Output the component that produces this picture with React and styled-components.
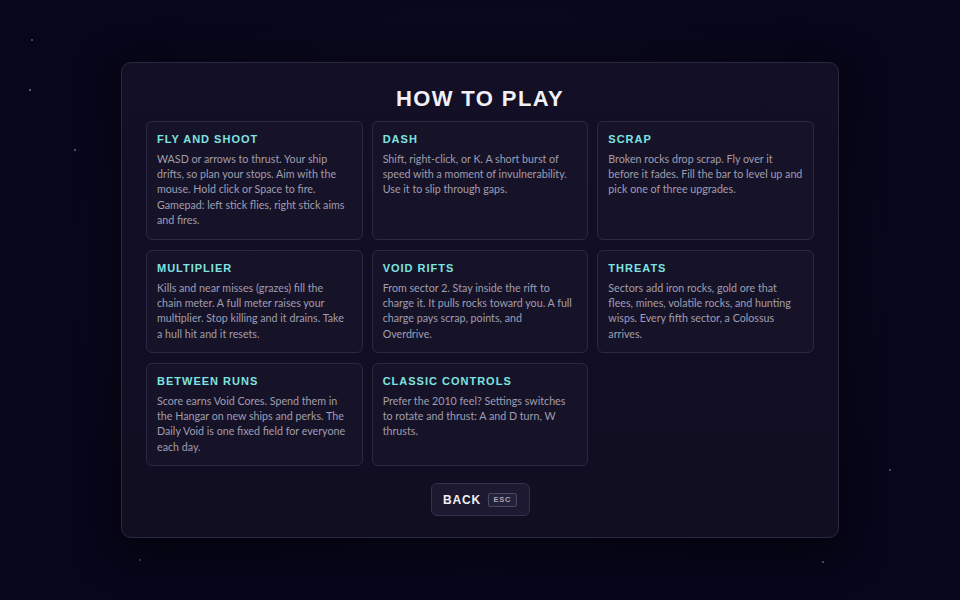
import styled, { createGlobalStyle } from "styled-components";

const GlobalStyle = createGlobalStyle`
  html, body {
    margin: 0;
    padding: 0;
    height: 100%;
  }
  body {
    background-color: #07061a;
    background-image:
      radial-gradient(circle at 30px 90px, rgba(255,255,255,0.35) 0 1px, transparent 1.5px),
      radial-gradient(circle at 75px 150px, rgba(255,255,255,0.3) 0 1px, transparent 1.5px),
      radial-gradient(circle at 32px 40px, rgba(255,255,255,0.25) 0 1px, transparent 1.5px),
      radial-gradient(circle at 890px 470px, rgba(255,255,255,0.25) 0 1px, transparent 1.5px),
      radial-gradient(circle at 823px 562px, rgba(255,255,255,0.3) 0 1px, transparent 1.5px),
      radial-gradient(circle at 140px 560px, rgba(255,255,255,0.2) 0 1px, transparent 1.5px),
      radial-gradient(ellipse at 50% 45%, #0f0d22 0%, #07061a 70%);
    font-family: "Noto Sans", Inter, sans-serif;
  }
  #root {
    height: 100%;
  }
`;

const Screen = styled.div`
  height: 100%;
  display: flex;
  align-items: center;
  justify-content: center;
`;

const Panel = styled.div`
  width: 718px;
  box-sizing: border-box;
  padding: 22px 24px 21px;
  background: linear-gradient(180deg, #120f26 0%, #110e22 100%);
  border: 1px solid #2a2740;
  border-radius: 10px;
  box-shadow: 0 10px 40px rgba(0, 0, 0, 0.6);
  display: flex;
  flex-direction: column;
  align-items: center;
`;

const Title = styled.h1`
  margin: 0 0 8px;
  font-family: "Liberation Sans", Arial, sans-serif;
  font-weight: 700;
  font-size: 22px;
  line-height: 28px;
  letter-spacing: 1.4px;
  color: #f1f0f6;
`;

const Grid = styled.div`
  width: 100%;
  display: grid;
  grid-template-columns: repeat(3, 1fr);
  column-gap: 9px;
  row-gap: 10px;
`;

const Card = styled.div`
  box-sizing: border-box;
  min-height: ${(p) => (p.$tall ? "119px" : "103px")};
  padding: 10px 9px 9px 10px;
  background: #161329;
  border: 1px solid #2b2843;
  border-radius: 6px;
`;

const CardTitle = styled.h2`
  margin: 0 0 5px;
  font-family: "Liberation Sans", Arial, sans-serif;
  font-weight: 700;
  font-size: 11px;
  line-height: 14px;
  letter-spacing: 1px;
  color: #7ee3e0;
`;

const CardText = styled.p`
  margin: 0;
  white-space: pre-line;
  font-family: Lato, "Noto Sans", sans-serif;
  font-size: 10.7px;
  line-height: 15.2px;
  color: #a09dae;
`;

const BackButton = styled.button`
  margin-top: 17px;
  width: 99px;
  height: 33px;
  display: flex;
  align-items: center;
  justify-content: center;
  gap: 7px;
  background: #1c1930;
  border: 1px solid #34314a;
  border-radius: 6px;
  color: #f1f0f6;
  font-family: "Liberation Sans", Arial, sans-serif;
  font-weight: 700;
  font-size: 12px;
  letter-spacing: 0.8px;
  cursor: pointer;
`;

const Key = styled.span`
  display: inline-flex;
  align-items: center;
  justify-content: center;
  box-sizing: border-box;
  height: 14px;
  width: 29px;
  border: 1px solid #4a4760;
  border-radius: 2px;
  background: #24213a;
  color: #a9a6b8;
  font-size: 7.5px;
  letter-spacing: 0.8px;
`;

// line breaks follow the game's own wrapping
const sections = [
  {
    title: "FLY AND SHOOT",
    text: "WASD or arrows to thrust. Your ship\ndrifts, so plan your stops. Aim with the\nmouse. Hold click or Space to fire.\nGamepad: left stick flies, right stick aims\nand fires.",
  },
  {
    title: "DASH",
    text: "Shift, right-click, or K. A short burst of\nspeed with a moment of invulnerability.\nUse it to slip through gaps.",
  },
  {
    title: "SCRAP",
    text: "Broken rocks drop scrap. Fly over it\nbefore it fades. Fill the bar to level up and\npick one of three upgrades.",
  },
  {
    title: "MULTIPLIER",
    text: "Kills and near misses (grazes) fill the\nchain meter. A full meter raises your\nmultiplier. Stop killing and it drains. Take\na hull hit and it resets.",
  },
  {
    title: "VOID RIFTS",
    text: "From sector 2. Stay inside the rift to\ncharge it. It pulls rocks toward you. A full\ncharge pays scrap, points, and\nOverdrive.",
  },
  {
    title: "THREATS",
    text: "Sectors add iron rocks, gold ore that\nflees, mines, volatile rocks, and hunting\nwisps. Every fifth sector, a Colossus\narrives.",
  },
  {
    title: "BETWEEN RUNS",
    text: "Score earns Void Cores. Spend them in\nthe Hangar on new ships and perks. The\nDaily Void is one fixed field for everyone\neach day.",
  },
  {
    title: "CLASSIC CONTROLS",
    text: "Prefer the 2010 feel? Settings switches\nto rotate and thrust: A and D turn, W\nthrusts.",
  },
];

export default function App() {
  return (
    <>
      <GlobalStyle />
      <Screen>
        <Panel>
          <Title>HOW TO PLAY</Title>
          <Grid>
            {sections.map((s, i) => (
              <Card key={s.title} $tall={i < 3}>
                <CardTitle>{s.title}</CardTitle>
                <CardText>{s.text}</CardText>
              </Card>
            ))}
          </Grid>
          <BackButton>
            BACK <Key>ESC</Key>
          </BackButton>
        </Panel>
      </Screen>
    </>
  );
}
